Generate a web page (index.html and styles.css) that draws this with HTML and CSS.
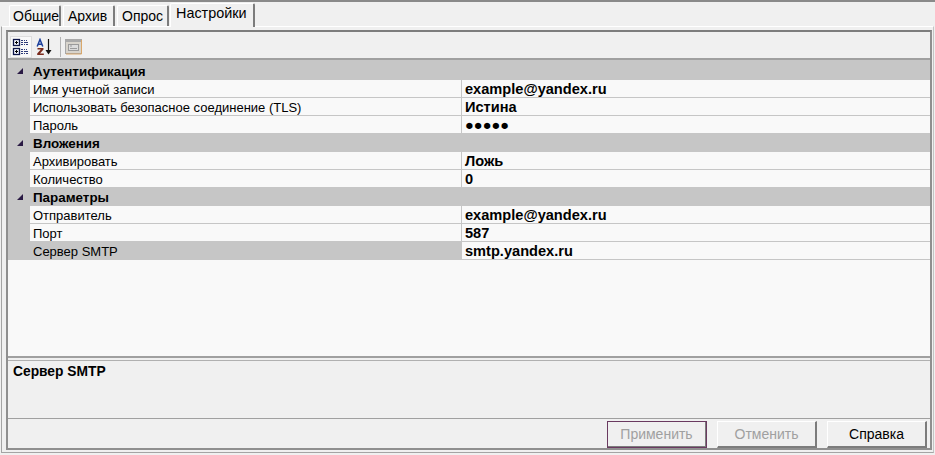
FILE: index.html
```html
<!DOCTYPE html>
<html lang="ru">
<head>
<meta charset="utf-8">
<title>Настройки</title>
<link rel="stylesheet" href="styles.css">
</head>
<body>
<div class="window">
  <div class="tabs">
    <div class="tab tab-1">Общие</div>
    <div class="tab tab-2">Архив</div>
    <div class="tab tab-3">Опрос</div>
    <div class="tab tab-active">Настройки</div>
  </div>
  <div class="page">
    <div class="pane">
      <div class="toolbar">
        <button class="tool tool-on" aria-label="По категориям">
          <svg width="18" height="18" viewBox="0 0 18 18"><g fill="none" stroke="#0c1448" stroke-width="1.300"><rect x="1.5" y="1.5" width="6" height="6" fill="#f4f6ff"/><rect x="1.5" y="10.5" width="6" height="6" fill="#f4f6ff"/><path d="M3 4.500h3M4.500 3v3M3 13.500h3M4.500 12v3" stroke="#000" stroke-width="1"/></g><path d="M9 2h2v1H9zM12 2h1v1h-1zM14 2h1v1h-1zM9 4h2v1H9zM12 4h4v1h-4zM9 6h2v1H9zM12 6h1v1h-1zM14 6h2v1h-2zM9 11h2v1H9zM12 11h1v1h-1zM14 11h1v1h-1zM9 13h2v1H9zM12 13h4v1h-4zM9 15h2v1H9zM12 15h1v1h-1zM14 15h2v1h-2z" fill="#2c3a78"/></svg>
        </button>
        <button class="tool" aria-label="По алфавиту">
          <svg width="18" height="18" viewBox="0 0 18 18"><path d="M1.200 8.500 4 1.500 6.800 8.500M2.200 6.200h3.600" fill="none" stroke="#1b3f9c" stroke-width="1.500"/><path d="M1.500 10h6v1.400L4 15.500h3.800V17H1.200v-1.400l3.600-4.100H1.500z" fill="#7a2a1c"/><path d="M12.500 1v12" stroke="#111" stroke-width="1.200"/><path d="M9.500 12h6l-3 4.500z" fill="#111"/></svg>
        </button>
        <div class="tool-sep"></div>
        <button class="tool tool-off" aria-label="Страницы свойств">
          <svg width="18" height="16" viewBox="0 0 18 16"><rect x="0.500" y="0.500" width="16" height="14" fill="#d8d4cc" stroke="#a8a8a8"/><path d="M1 1h15v2H1z" fill="#a9a9a9"/><rect x="3.500" y="5.500" width="10" height="6" fill="#dcdcdc" stroke="#9a9a9a"/><path d="M5 7h2M5 9.500h7" stroke="#9a9a9a"/><path d="M16.500 1v14H1" fill="none" stroke="#d9a76a"/></svg>
        </button>
      </div>
      <div class="grid">
        <div class="group"><span class="arrow"></span><span class="group-name">Аутентификация</span></div>
        <div class="row"><div class="gutter"></div><div class="name">Имя учетной записи</div><div class="value">example@yandex.ru</div></div>
        <div class="row"><div class="gutter"></div><div class="name">Использовать безопасное соединение (TLS)</div><div class="value">Истина</div></div>
        <div class="row"><div class="gutter"></div><div class="name">Пароль</div><div class="value">●●●●●</div></div>
        <div class="group"><span class="arrow"></span><span class="group-name">Вложения</span></div>
        <div class="row"><div class="gutter"></div><div class="name">Архивировать</div><div class="value">Ложь</div></div>
        <div class="row"><div class="gutter"></div><div class="name">Количество</div><div class="value">0</div></div>
        <div class="group"><span class="arrow"></span><span class="group-name">Параметры</span></div>
        <div class="row"><div class="gutter"></div><div class="name">Отправитель</div><div class="value">example@yandex.ru</div></div>
        <div class="row"><div class="gutter"></div><div class="name">Порт</div><div class="value">587</div></div>
        <div class="row row-selected"><div class="gutter"></div><div class="name">Сервер SMTP</div><div class="value">smtp.yandex.ru</div></div>
      </div>
      <div class="help"><div class="help-title">Сервер SMTP</div></div>
      <div class="buttons">
        <button class="btn btn-default" disabled>Применить</button>
        <button class="btn" disabled>Отменить</button>
        <button class="btn">Справка</button>
      </div>
    </div>
  </div>
</div>
</body>
</html>
```
FILE: styles.css
```css
* { box-sizing: border-box; }
html, body { margin: 0; padding: 0; }
body {
  width: 935px;
  height: 455px;
  overflow: hidden;
  background: #f0f0f0;
  font-family: "Liberation Sans", Arial, sans-serif;
  font-size: 13px;
  color: #000;
}
.window {
  width: 935px;
  height: 455px;
  display: flex;
  flex-direction: column;
  border-top: 2px solid #8a8a8a;
  padding: 0 1px 2px 1px;
}
.tabs {
  height: 24px;
  flex: none;
  display: flex;
  align-items: flex-end;
  padding-left: 8px;
  gap: 2px;
  font-size: 14px;
}
.tab {
  height: 21px;
  padding: 1px 0 0 4px;
  background: #f0f0f0;
  border-left: 1px solid #fff;
  border-top: 1px solid #fff;
  border-right: 2px solid #7c7c7c;
  border-top-left-radius: 2px;
  border-top-right-radius: 2px;
  line-height: 19px;
  white-space: nowrap;
}
.tab-1 { width: 52px; padding-left: 3px; }
.tab-2 { width: 52px; }
.tab-3 { width: 52px; }
.tab-active {
  width: 85px;
  height: 24px;
  margin-left: -1px;
  margin-bottom: -1px;
  padding: 1px 0 0 5px;
  font-size: 14.400px;
  line-height: 17px;
  position: relative;
  z-index: 1;
}
.page {
  flex: 1;
  min-height: 0;
  display: flex;
  border-top: 1px solid #fff;
  border-left: 1px solid #a4a4a4;
  border-right: 1px solid #c4c4c4;
  border-bottom: 1px solid #a4a4a4;
  padding: 3px 1px 2px 4px;
}
.pane {
  flex: 1;
  min-width: 0;
  display: flex;
  flex-direction: column;
  border: 2px solid #8f8f8f;
  border-top-color: #7d7d7d;
}
.toolbar {
  height: 28px;
  flex: none;
  display: flex;
  align-items: center;
  padding: 4px 0 0 2px;
  gap: 2px;
  background: #f0f0f0;
  border-bottom: 2px solid #a0a0a0;
}
.tool {
  width: 22px;
  height: 22px;
  padding: 0;
  border: 1px solid transparent;
  background: transparent;
  display: flex;
  align-items: center;
  justify-content: center;
}
.tool-on { background: #f9f9f9; border-color: #dedede; }
.tool-off { margin-left: -2px; }
.tool-sep { width: 1px; height: 20px; margin: 0 2px; background: #b4b4b4; }
.grid {
  flex: 1;
  min-height: 0;
  background: #f9f9f9;
  border-bottom: 2px solid #a0a0a0;
}
.group {
  height: 18px;
  display: flex;
  align-items: center;
  background: #c6c6c6;
  font-weight: bold;
  font-size: 13.400px;
}
.group:first-child { height: 20px; padding-top: 2px; }
.arrow {
  width: 6px;
  height: 6px;
  margin-left: 9px;
  margin-right: 10px;
  background: #2a1a44;
  clip-path: polygon(100% 0, 100% 100%, 0 100%);
}
.row {
  height: 18px;
  display: flex;
  border-bottom: 1px solid #c6c6c6;
}
.gutter { width: 22px; flex: none; background: #c6c6c6; margin-bottom: -1px; }
.name {
  width: 432px;
  flex: none;
  padding-left: 3px;
  line-height: 20px;
  border-right: 1px solid #c6c6c6;
  white-space: nowrap;
}
.value {
  flex: 1;
  padding-left: 3px;
  line-height: 18px;
  font-weight: bold;
  font-size: 14.600px;
  white-space: nowrap;
}
.row-selected .name { background: #c6c6c6; }
.help {
  height: 59px;
  flex: none;
  margin-top: 2px;
  padding: 2px 5px;
  background: #f0f0f0;
  border-top: 1px solid #b0b0b0;
  border-bottom: 1px solid #a0a0a0;
}
.help-title { font-weight: bold; font-size: 13.800px; line-height: 18px; }
.buttons {
  height: 29px;
  flex: none;
  display: flex;
  justify-content: flex-end;
  align-items: flex-start;
  gap: 10px;
  padding: 2px 3px 0 0;
}
.btn {
  width: 100px;
  height: 27px;
  padding: 0;
  font: inherit;
  font-size: 14px;
  color: #000;
  background: #f0f0f0;
  border: 1px solid #fff;
  border-right: 2px solid #7c7c7c;
  border-bottom: 2px solid #7c7c7c;
}
.btn:disabled { color: #a0a0a0; }
.btn-default { outline: 1px solid #6a3a60; outline-offset: -1px; }
```
